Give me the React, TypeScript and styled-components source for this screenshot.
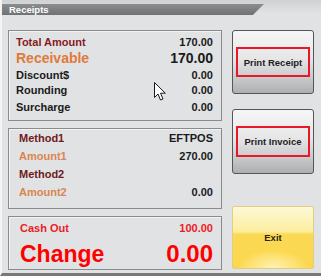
import styled, { createGlobalStyle } from "styled-components";

const GlobalStyle = createGlobalStyle`
  html, body {
    margin: 0;
    padding: 0;
    background: #e1e2e4;
  }
  * {
    box-sizing: border-box;
  }
`;

const Window = styled.div`
  position: relative;
  width: 321px;
  height: 276px;
  background: #e1e2e4;
  border-left: 2px solid #f4f4f5;
  border-bottom: 3px solid #77787a;
  font-family: "Liberation Sans", Arial, sans-serif;
  font-weight: bold;
  overflow: hidden;
`;

const TitleStrip = styled.div`
  height: 15px;
  padding-top: 4px;
  margin-left: -2px;
  background: linear-gradient(#d0d1d3, #e3e4e6);
`;

const TitleTab = styled.div`
  width: 264px;
  height: 11px;
  padding-left: 9px;
  display: flex;
  align-items: center;
  background: linear-gradient(#8c8d8f, #707173);
  clip-path: polygon(0 0, 100% 0, 95.8% 100%, 0 100%);
  color: #fff;
  font-size: 9.5px;
`;

const Body = styled.div`
  display: flex;
  padding: 15px 0 0 6px;
  gap: 10px;
`;

const LeftColumn = styled.div`
  width: 214px;
  display: flex;
  flex-direction: column;
  gap: 7px;
`;

const Box = styled.div<{ $h: number; $pl: number; $pt?: number }>`
  height: ${(p) => p.$h}px;
  padding: ${(p) => p.$pt ?? 0}px 8px 0 ${(p) => p.$pl}px;
  border: 1px solid #8a8b8d;
  box-shadow: inset 1px 1px 0 #f3f3f4;
`;

const Row = styled.div<{ $h: number }>`
  height: ${(p) => p.$h}px;
  display: flex;
  align-items: center;
  justify-content: space-between;
`;

const Label = styled.span<{ $color: string; $size?: number }>`
  color: ${(p) => p.$color};
  font-size: ${(p) => p.$size ?? 11}px;
`;

const Value = styled.span<{ $color?: string; $size?: number }>`
  color: ${(p) => p.$color ?? "#1a1a1a"};
  font-size: ${(p) => p.$size ?? 11}px;
`;

const RightColumn = styled.div`
  width: 82px;
  display: flex;
  flex-direction: column;
`;

const GreyButton = styled.div<{ $h: number; $mt: number }>`
  height: ${(p) => p.$h}px;
  margin-top: ${(p) => p.$mt}px;
  display: flex;
  align-items: center;
  justify-content: center;
  border: 1px solid #55565a;
  border-radius: 3px;
  background: linear-gradient(#f6f6f6 0%, #e6e6e7 45%, #c9cacc 75%, #aeafb1 100%);
`;

const RedFrame = styled.div<{ $h: number }>`
  width: 74px;
  height: ${(p) => p.$h}px;
  display: flex;
  align-items: center;
  justify-content: center;
  border: 2px solid #e8182a;
  color: #1d1d22;
  font-size: 9.5px;
  white-space: nowrap;
`;

const ExitButton = styled.div`
  height: 63px;
  margin-top: 32px;
  display: flex;
  align-items: center;
  justify-content: center;
  border: 1px solid #e2cc86;
  border-radius: 2px;
  background:
    radial-gradient(ellipse 45% 30% at 50% 100%, rgba(255, 248, 200, 0.85), rgba(255, 248, 200, 0)),
    linear-gradient(#fdf8d6 0%, #fcee9f 40%, #fbd955 45%, #fcd74c 100%);
  color: #2a2418;
  font-size: 9.5px;
`;

const Cursor = styled.svg`
  position: absolute;
  left: 152px;
  top: 82px;
`;

export default function App() {
  return (
    <>
      <GlobalStyle />
      <Window>
        <TitleStrip>
          <TitleTab>Receipts</TitleTab>
        </TitleStrip>
        <Body>
          <LeftColumn>
            <Box $h={91} $pl={7} $pt={5}>
              <Row $h={12}>
                <Label $color="#861b1e">Total Amount</Label>
                <Value>170.00</Value>
              </Row>
              <Row $h={20}>
                <Label $color="#e07a3a" $size={14}>Receivable</Label>
                <Value $size={14}>170.00</Value>
              </Row>
              <Row $h={13}>
                <Label $color="#1a1a1a">Discount$</Label>
                <Value>0.00</Value>
              </Row>
              <Row $h={17}>
                <Label $color="#1a1a1a">Rounding</Label>
                <Value>0.00</Value>
              </Row>
              <Row $h={17}>
                <Label $color="#1a1a1a">Surcharge</Label>
                <Value>0.00</Value>
              </Row>
            </Box>
            <Box $h={81} $pl={10}>
              <Row $h={18}>
                <Label $color="#6e1a20">Method1</Label>
                <Value>EFTPOS</Value>
              </Row>
              <Row $h={18}>
                <Label $color="#d9864f">Amount1</Label>
                <Value>270.00</Value>
              </Row>
              <Row $h={18}>
                <Label $color="#6e1a20">Method2</Label>
                <Value></Value>
              </Row>
              <Row $h={18}>
                <Label $color="#d9864f">Amount2</Label>
                <Value>0.00</Value>
              </Row>
            </Box>
            <Box $h={54} $pl={11}>
              <Row $h={22}>
                <Label $color="#ec1c24">Cash Out</Label>
                <Value $color="#ec1c24">100.00</Value>
              </Row>
              <Row $h={30}>
                <Label $color="#ff0000" $size={23}>Change</Label>
                <Value $color="#ff0000" $size={24}>0.00</Value>
              </Row>
            </Box>
          </LeftColumn>
          <RightColumn>
            <GreyButton $h={64} $mt={0}>
              <RedFrame $h={30}>Print Receipt</RedFrame>
            </GreyButton>
            <GreyButton $h={65} $mt={15}>
              <RedFrame $h={31}>Print Invoice</RedFrame>
            </GreyButton>
            <ExitButton>Exit</ExitButton>
          </RightColumn>
        </Body>
        <Cursor width="12" height="19" viewBox="0 0 12 19">
          <path
            d="M0.5 0.5 L0.5 15.5 L4 12 L6.5 18 L9 17 L6.5 11.2 L11.3 11.2 Z"
            fill="#ffffff"
            stroke="#1a1a1a"
            strokeWidth="1"
            strokeLinejoin="round"
          />
        </Cursor>
      </Window>
    </>
  );
}
